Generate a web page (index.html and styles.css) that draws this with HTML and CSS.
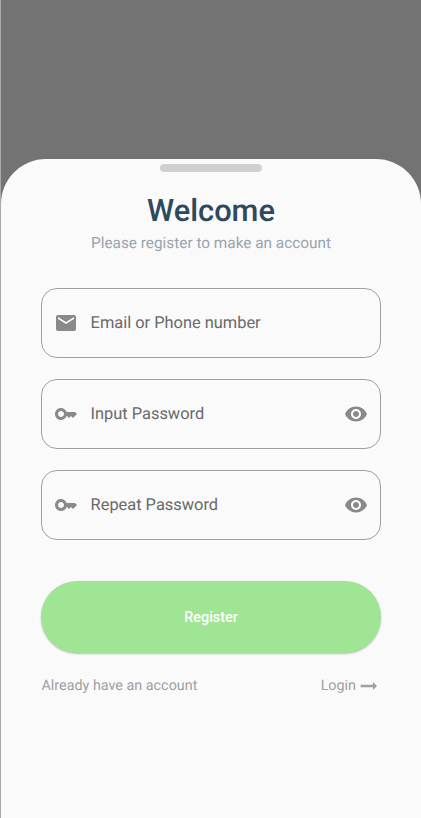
FILE: index.html
```html
<!DOCTYPE html>
<html lang="en">
<head>
<meta charset="utf-8">
<title>Register</title>
<link rel="stylesheet" href="styles.css">
</head>
<body>
<main class="screen">
  <section class="sheet">
    <div class="handle"></div>
    <h1 class="title">Welcome</h1>
    <p class="subtitle">Please register to make an account</p>
    <form class="form">
      <div class="field">
        <svg class="icon" viewBox="0 0 24 24"><path d="M20 4H4c-1.1 0-1.99.9-1.99 2L2 18c0 1.1.9 2 2 2h16c1.1 0 2-.9 2-2V6c0-1.1-.9-2-2-2zm0 4l-8 5-8-5V6l8 5 8-5v2z"/></svg>
        <span class="label">Email or Phone number</span>
      </div>
      <div class="field">
        <svg class="icon" viewBox="0 0 24 24"><path d="M21 10h-8.35C11.83 7.67 9.61 6 7 6c-3.31 0-6 2.69-6 6s2.69 6 6 6c2.61 0 4.83-1.67 5.65-4H13l2 2 2-2 2 2 4-4.04L21 10zM7 15c-1.65 0-3-1.35-3-3s1.35-3 3-3 3 1.35 3 3-1.35 3-3 3z"/></svg>
        <span class="label">Input Password</span>
        <svg class="icon" viewBox="0 0 24 24"><path d="M12 4.5C7 4.5 2.73 7.61 1 12c1.73 4.39 6 7.5 11 7.5s9.27-3.11 11-7.5c-1.73-4.39-6-7.5-11-7.5zM12 17c-2.76 0-5-2.24-5-5s2.24-5 5-5 5 2.24 5 5-2.24 5-5 5zm0-8c-1.66 0-3 1.34-3 3s1.34 3 3 3 3-1.34 3-3-1.34-3-3-3z"/></svg>
      </div>
      <div class="field">
        <svg class="icon" viewBox="0 0 24 24"><path d="M21 10h-8.35C11.83 7.67 9.61 6 7 6c-3.31 0-6 2.69-6 6s2.69 6 6 6c2.61 0 4.83-1.67 5.65-4H13l2 2 2-2 2 2 4-4.04L21 10zM7 15c-1.65 0-3-1.35-3-3s1.35-3 3-3 3 1.35 3 3-1.35 3-3 3z"/></svg>
        <span class="label">Repeat Password</span>
        <svg class="icon" viewBox="0 0 24 24"><path d="M12 4.5C7 4.5 2.73 7.61 1 12c1.73 4.39 6 7.5 11 7.5s9.27-3.11 11-7.5c-1.73-4.39-6-7.5-11-7.5zM12 17c-2.76 0-5-2.24-5-5s2.24-5 5-5 5 2.24 5 5-2.24 5-5 5zm0-8c-1.66 0-3 1.34-3 3s1.34 3 3 3 3-1.34 3-3-1.34-3-3-3z"/></svg>
      </div>
      <button class="submit" type="button">Register</button>
    </form>
    <footer class="footer">
      <span>Already have an account</span>
      <a class="login"><span>Login</span><svg class="arrow" viewBox="0 0 24 24"><path d="M16.01 10.8H3.6v2.4h12.41V16L20 12l-3.99-4v2.8z"/></svg></a>
    </footer>
  </section>
</main>
</body>
</html>
```

FILE: styles.css
```css
* {
  box-sizing: border-box;
}

body {
  margin: 0;
  font-family: Roboto, "Liberation Sans", sans-serif;
  text-rendering: geometricPrecision;
}

.screen {
  height: 818px;
  padding-top: 159px;
  border-left: 1px solid #a9a9a9;
  background: #737373;
  overflow: hidden;
}

.sheet {
  height: 659px;
  padding: 5px 40px 0;
  border-radius: 45px 45px 0 0;
  background: #fafafa;
}

.handle {
  width: 102px;
  height: 8px;
  margin: 0 auto;
  border-radius: 4px;
  background: #d0d0d0;
}

.title {
  margin: 19px 0 0;
  color: #2d495e;
  font-size: 30.8px;
  line-height: 40px;
  font-weight: 500;
  text-align: center;
}

.subtitle {
  margin: 3px 0 0;
  color: #98a4ae;
  font-size: 15.35px;
  line-height: 18px;
  text-align: center;
}

.form {
  display: flex;
  flex-direction: column;
  gap: 21px;
  margin-top: 36px;
}

.field {
  display: flex;
  align-items: center;
  height: 70px;
  padding: 0 12px;
  border: 1px solid #a0a0a0;
  border-radius: 16px;
}

.icon {
  flex: none;
  width: 24px;
  height: 24px;
  fill: #898989;
}

.label {
  flex: 1;
  margin-left: 12.6px;
  padding-top: 2px;
  color: #696969;
  font-size: 16.4px;
  line-height: 20px;
}

.submit {
  height: 72px;
  margin-top: 20px;
  padding: 2px 0 0;
  border: 0;
  border-radius: 36px;
  background: #a0e594;
  box-shadow: 0 1px 2px rgba(0, 0, 0, 0.25);
  color: #fff;
  font: 500 14.4px/20px Roboto, "Liberation Sans", sans-serif;
}

.footer {
  display: flex;
  justify-content: space-between;
  align-items: center;
  margin-top: 21px;
  padding-left: 0.5px;
  color: #a0a0a0;
  font-size: 14.35px;
  line-height: 24px;
}

.login {
  display: flex;
  align-items: center;
  gap: 1px;
}

.arrow {
  width: 24px;
  height: 24px;
  fill: #a0a0a0;
}
```
